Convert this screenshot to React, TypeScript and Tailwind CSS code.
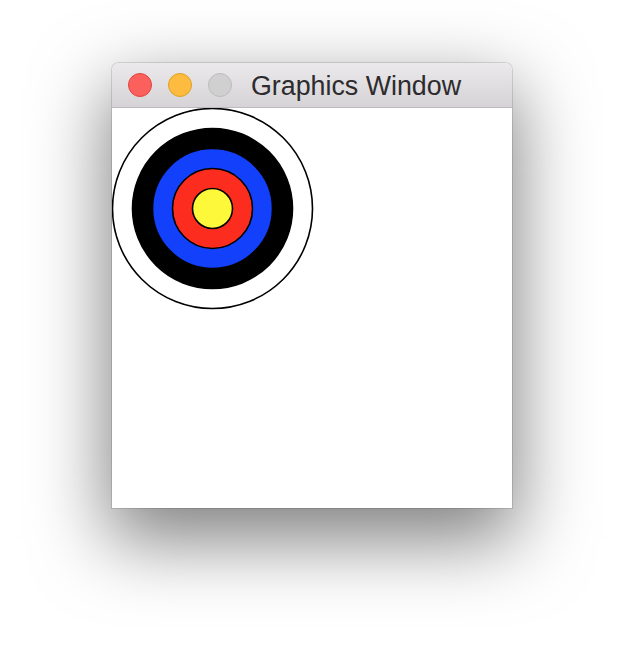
export default function App() {
  const rings = [
    { r: 100, fill: "#ffffff" },
    { r: 80, fill: "#000000" },
    { r: 60, fill: "#1240fb" },
    { r: 40, fill: "#fc2d1e" },
    { r: 20, fill: "#fdf83a" },
  ]

  return (
    <div className="w-[624px] h-[668px] bg-white pl-[112px] pt-[63px]">
      <div className="w-[400px] rounded-t-[7px] shadow-[0_0_0_1px_rgba(0,0,0,0.12),0_28px_75px_4px_rgba(0,0,0,0.5)]">
        {/* title bar */}
        <div className="h-[45px] flex items-center rounded-t-[7px] border-b border-[#bcbabc] bg-gradient-to-b from-[#ebe9eb] to-[#d5d3d5] pl-[16px]">
          <div className="flex gap-[16px]">
            <span className="w-[24px] h-[24px] rounded-full bg-[#fc605c] border border-[#e0443e]" />
            <span className="w-[24px] h-[24px] rounded-full bg-[#fdbc40] border border-[#dea123]" />
            <span className="w-[24px] h-[24px] rounded-full bg-[#d1d0d1] border border-[#bdbcbd]" />
          </div>
          <span className="ml-[19px] mt-[3px] text-[26.8px] leading-none text-[#2d2b2d] font-['Liberation_Sans',sans-serif]">
            Graphics Window
          </span>
        </div>
        {/* canvas */}
        <svg width="400" height="400" className="block bg-white">
          {rings.map((ring) => (
            <circle key={ring.r} cx="100.5" cy="100.5" r={ring.r} fill={ring.fill} stroke="#000" strokeWidth="1.6" />
          ))}
        </svg>
      </div>
    </div>
  )
}
